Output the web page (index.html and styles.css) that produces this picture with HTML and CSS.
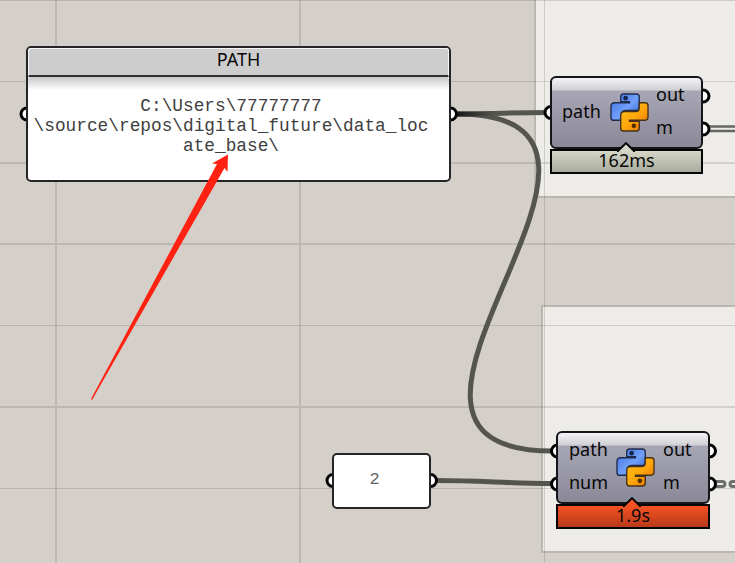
FILE: index.html
```html
<!DOCTYPE html>
<html lang="en">
<head>
<meta charset="utf-8">
<title>Node canvas</title>
<link rel="stylesheet" href="styles.css">
</head>
<body>
<main class="canvas">
  <div class="group group-top"></div>
  <div class="group group-bottom"></div>

  <svg class="layer" width="735" height="563" viewBox="0 0 735 563">
    <defs>
      <linearGradient id="blue" x1="0" y1="0" x2="1" y2="1"><stop offset="0" stop-color="#3d6ce2"/><stop offset=".55" stop-color="#71a0fa"/><stop offset="1" stop-color="#2959c5"/></linearGradient>
      <linearGradient id="orange" x1="0" y1="0" x2="1" y2="1"><stop offset="0" stop-color="#ffc021"/><stop offset=".5" stop-color="#ffa90b"/><stop offset="1" stop-color="#e76b00"/></linearGradient>
      <linearGradient id="wire" gradientUnits="userSpaceOnUse" x1="455" y1="0" x2="495" y2="0"><stop offset="0" stop-color="#151515"/><stop offset="1" stop-color="#555550"/></linearGradient>
      <symbol id="python" viewBox="0 0 40 40">
        <path d="M11 4 Q11 1 14 1H27Q30 1 30 4V14Q30 18 26 18H16Q12 18 12 22V28H4Q1 28 1 25V14Q1 10 5 10H20V9H11Z" fill="url(#blue)" stroke="#202b4c" stroke-width="1.4"/>
        <path d="M30 10H36Q39 10 39 13V24Q39 28 35 28H20V29H30V36Q30 39 27 39H14Q11 39 11 36V23Q11 19 15 19H26Q30 19 30 15Z" fill="url(#orange)" stroke="#45301a" stroke-width="1.4"/>
        <circle cx="16" cy="5.3" r="2.4" fill="#17284f"/><circle cx="24.5" cy="33.7" r="2.4" fill="#563000"/>
      </symbol>
    </defs>
    <g class="grid">
      <path d="M0 .5H735M0 81.5H735M0 325.5H735M0 488.5H735"/>
      <path class="grid-wide" d="M0 163H735M0 244H735M0 407H735M56 0V563M300 0V563"/>
      <path d="M544.5 0V563"/>
    </g>
    <g class="wires">
      <path class="wire-plain" d="M456 114C696 114 313 451 553 451"/>
      <path d="M456 114C505 114 502 112.500 549 112.500"/>
      <path class="wire-plain" d="M436 480.500C485 480.500 504 483.500 553 483.500"/>
      <path class="double" d="M708 126.500H735M708 131H735"/>
      <path class="dash" d="M714 481.500H722Q725 481.500 725 484T722 486.500H714M736 481.500H733Q730 481.500 730 484T733 486.500H736"/>
    </g>
    <g class="ports">
      <circle cx="27" cy="114" r="6"/><circle cx="450.500" cy="114" r="6"/>
      <circle cx="333" cy="480.500" r="6"/><circle cx="430.500" cy="480.500" r="6"/>
      <circle cx="551" cy="112.500" r="6"/><circle cx="703" cy="96" r="6"/><circle cx="703" cy="129" r="6"/>
      <circle cx="557.500" cy="451" r="6"/><circle cx="557.500" cy="484" r="6"/><circle cx="709.500" cy="451" r="6"/><circle cx="709.500" cy="484" r="6"/>
    </g>
  </svg>

  <section class="panel panel-path">
    <header class="panel-title">PATH</header>
    <div class="panel-text">C:\Users\77777777<br>\source\repos\digital_future\data_loc<br>ate_base\</div>
  </section>

  <section class="panel panel-number">2</section>

  <section class="node node-first">
    <div class="node-body">
      <div class="inputs"><span>path</span></div>
      <svg class="logo" width="39" height="39"><use href="#python"/></svg>
      <div class="outputs"><span>out</span><span>m</span></div>
    </div>
    <div class="timer">162ms<svg class="notch" width="18" height="10" viewBox="0 0 18 10"><path d="M0 10L1 9L9 1L17 9L18 10" fill="#d5d6c6" stroke="#000" stroke-width="1.800"/></svg></div>
  </section>

  <section class="node node-second">
    <div class="node-body">
      <div class="inputs"><span>path</span><span>num</span></div>
      <svg class="logo" width="39" height="39"><use href="#python"/></svg>
      <div class="outputs"><span>out</span><span>m</span></div>
    </div>
    <div class="timer timer-slow">1.9s<svg class="notch" width="18" height="10" viewBox="0 0 18 10"><path d="M0 10L1 9L9 1L17 9L18 10" fill="#f45122" stroke="#000" stroke-width="1.800"/></svg></div>
  </section>

  <svg class="layer" width="735" height="563" viewBox="0 0 735 563">
    <path d="M91 399L217 164L212 163.500L228 154.500L227.500 172L224.500 168L92 400Z" fill="#ff2111"/>
  </svg>
</main>
</body>
</html>
```

FILE: styles.css
```css
* { box-sizing: border-box; }
body { margin: 0; }
.canvas {
  position: relative;
  width: 735px;
  height: 563px;
  overflow: hidden;
  background: #d4cfc8;
  color: #080808;
  font: 18px/24px "Noto Sans", sans-serif;
}
.layer { position: absolute; left: 0; top: 0; pointer-events: none; }
.grid path { fill: none; stroke: rgba(80, 80, 70, .2); stroke-width: 1; }
.grid .grid-wide { stroke-width: 2; stroke: rgba(80, 80, 70, .17); }
.group { position: absolute; background: #edece8; border: 2px solid #b9b7b0; }
.group-top { left: 534px; top: -2px; width: 210px; height: 200px; }
.group-bottom { left: 541px; top: 305px; width: 210px; height: 248px; }
.wires path { fill: none; stroke: url(#wire); stroke-width: 5; }
.wires .wire-plain { stroke: #555550; }
.wires .double { stroke: #656562; stroke-width: 2.5; }
.wires .dash { stroke: #6e6e6b; stroke-width: 3; }
.ports circle { fill: #fff; stroke: #000; stroke-width: 3; }

.panel { position: absolute; background: #fff; border: 2px solid #252527; border-radius: 5px; }
.panel-path { left: 26px; top: 46px; width: 425px; height: 136px; }
.panel-title {
  height: 29px;
  border: 1px solid #f6f6f6;
  border-bottom: 2px solid #303034;
  border-radius: 3px 3px 0 0;
  background: #cdcdcd;
  text-align: center;
  line-height: 21px;
}
.panel-text {
  padding: 19px 15px 0 0;
  background: linear-gradient(#c9c9c9, #fff 13px);
  border-radius: 3px;
  color: #404040;
  text-align: center;
  white-space: nowrap;
  font: 17.8px/20px "Liberation Mono", monospace;
}
.panel-number {
  left: 332px;
  top: 453px;
  width: 99px;
  height: 56px;
  padding: 13px 14px 0 0;
  text-align: center;
  color: #666;
  font: 17px/24px "Liberation Mono", monospace;
}

.node { position: absolute; width: 153px; }
.node-first { left: 550px; top: 76px; }
.node-second { left: 556px; top: 431px; width: 154px; }
.node-body {
  display: grid;
  grid-template-columns: 59px 40px 1fr;
  height: 73px;
  border: 2px solid #151519;
  border-radius: 6px;
  background: linear-gradient(#f4f4f6 0, #d0d0d6 12px, #a7a6b4 13px, #8b8998 100%);
}
.inputs, .outputs { display: flex; flex-direction: column; justify-content: center; gap: 9px; padding-left: 10px; padding-bottom: 4px; }
.node-second .inputs { padding-left: 11px; }
.outputs { padding-left: 5px; justify-content: flex-start; padding-top: 4px; }
.node-second .outputs { padding-left: 6px; }
.logo { margin: 15px 0 0 -1px; }
.timer {
  position: relative;
  height: 25px;
  border: 2px solid #050505;
  background: linear-gradient(#d5d6c6, #a8aa9d);
  text-align: center;
  line-height: 19px;
}
.timer-slow { background: linear-gradient(#f45122, #b83a1b); }
.notch { position: absolute; left: 65px; top: -9px; }
```
